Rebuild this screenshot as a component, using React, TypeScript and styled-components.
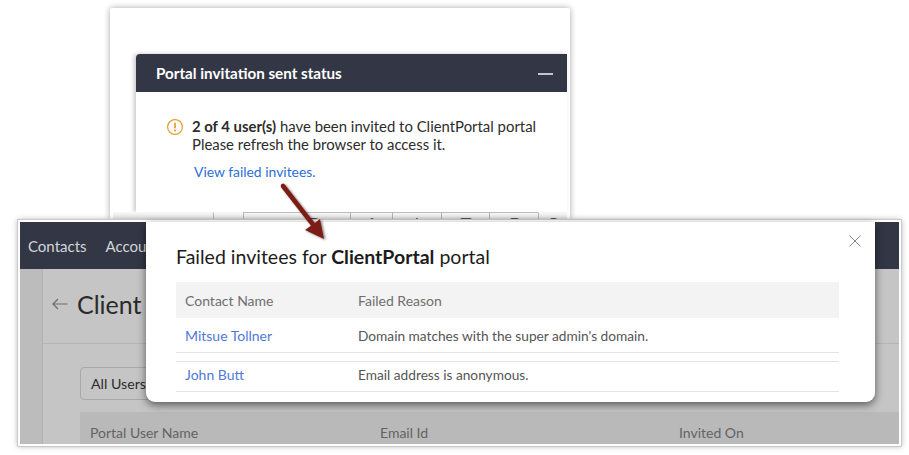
import {FC} from 'react';
import styled, {createGlobalStyle} from 'styled-components';

const Global = createGlobalStyle`
  html, body {
    margin: 0;
    background: #fff;
  }
  body {
    font-family: Lato, "Open Sans", sans-serif;
  }
`;

// the toolbar behind the modal, only its top few pixels are visible
const toolCells = [
  {w: 30, lined: false, mark: 0, shift: 0},
  {w: 107, lined: true, mark: 9, shift: 33},
  {w: 42, lined: true, mark: 4, shift: 0},
  {w: 49, lined: true, mark: 2, shift: 0},
  {w: 48, lined: true, mark: 12, shift: 0},
  {w: 49, lined: true, mark: 9, shift: 0},
  {w: 29, lined: false, mark: 7, shift: 0},
];

const App: FC = () => {
  return (
    <>
      <Global />
      <Page>
        <TopCard>
          <StatusPanel>
            <StatusHeader>
              <span>Portal invitation sent status</span>
              <Minimize />
            </StatusHeader>
            <StatusBody>
              <WarnIcon width="18" height="18" viewBox="0 0 18 18">
                <circle cx="9" cy="9" r="7.4" fill="none" stroke="#e3a03f" strokeWidth="1.3" />
                <rect x="8.1" y="4.6" width="1.8" height="5.8" rx="0.7" fill="#e3a03f" />
                <circle cx="9" cy="12.6" r="1.1" fill="#e3a03f" />
              </WarnIcon>
              <div>
                <Message><b>2 of 4 user(s)</b> have been invited to ClientPortal portal</Message>
                <Message>Please refresh the browser to access it.</Message>
                <ViewLink>View failed invitees.</ViewLink>
              </div>
            </StatusBody>
          </StatusPanel>
          <ToolStrip>
            {toolCells.map((c, i) => (
              <ToolCell key={i} $w={c.w} $lined={c.lined} $shift={c.shift}>
                {c.mark > 0 && <ToolMark $w={c.mark} />}
              </ToolCell>
            ))}
          </ToolStrip>
        </TopCard>

        <PortalFrame>
          <NavBar>
            <NavItem>Contacts</NavItem>
            <NavItem>Accou</NavItem>
          </NavBar>
          <Dimmed>
            <SideRail />
            <Main>
              <TitleRow>
                <svg width="16" height="12" viewBox="0 0 16 12">
                  <path d="M15.5 6H1M6 1L1 6l5 5" fill="none" stroke="#6e6e6e" strokeWidth="1.2" />
                </svg>
                <PageTitle>Client</PageTitle>
              </TitleRow>
              <FilterRow>
                <FilterBox>All Users</FilterBox>
              </FilterRow>
              <UsersHead>
                <UsersCol $w={290}>Portal User Name</UsersCol>
                <UsersCol $w={299}>Email Id</UsersCol>
                <UsersCol $w={200}>Invited On</UsersCol>
              </UsersHead>
            </Main>
          </Dimmed>

          <Modal>
            <CloseIcon width="12" height="12" viewBox="0 0 12 12">
              <path d="M.5.5l11 11M11.5.5l-11 11" stroke="#8a8a8a" strokeWidth="1" fill="none" />
            </CloseIcon>
            <ModalTitle>Failed invitees for <b>ClientPortal</b> portal</ModalTitle>
            <HeadRow>
              <NameCell>Contact Name</NameCell>
              <div>Failed Reason</div>
            </HeadRow>
            <BodyRow>
              <NameLink>Mitsue Tollner</NameLink>
              <ReasonCell>Domain matches with the super admin's domain.</ReasonCell>
            </BodyRow>
            <LastRow>
              <NameLink>John Butt</NameLink>
              <ReasonCell>Email address is anonymous.</ReasonCell>
            </LastRow>
          </Modal>
        </PortalFrame>

        <Arrow width="60" height="70" viewBox="0 0 60 70">
          <defs>
            <filter id="arrowShadow" x="-30%" y="-30%" width="160%" height="160%">
              <feDropShadow dx="1.5" dy="1" stdDeviation="1.2" floodColor="#000" floodOpacity="0.5" />
            </filter>
          </defs>
          <g filter="url(#arrowShadow)">
            <path d="M5 5L40 50" stroke="#7b1c16" strokeWidth="4.5" strokeLinecap="round" fill="none" />
            <path d="M46 58L27 49L42 38Z" fill="#7b1c16" />
          </g>
        </Arrow>
      </Page>
    </>
  );
};

const Page = styled.div`
  position: relative;
  width: 909px;
  height: 455px;
  overflow: hidden;
  padding-top: 8px;
  box-sizing: border-box;
`;

const TopCard = styled.div`
  width: 460px;
  height: 212px;
  margin-left: 110px;
  padding: 46px 3px 0 26px;
  box-sizing: border-box;
  background: #fff;
  border-radius: 2px;
  box-shadow: 0 0 6px rgba(0, 0, 0, 0.35);
  display: flex;
  flex-direction: column;
`;

const StatusPanel = styled.div`
  flex: 1;
  background: #fff;
  border-radius: 4px 0 0 0;
  box-shadow: -2px 0 4px rgba(0, 0, 0, 0.22);
`;

const StatusHeader = styled.div`
  height: 38px;
  padding: 0 14px 0 20px;
  display: flex;
  align-items: center;
  justify-content: space-between;
  background: #333745;
  border-radius: 4px 0 0 0;
  color: #fff;
  font-size: 15.2px;
  font-weight: 700;
`;

const Minimize = styled.div`
  width: 15px;
  height: 1.5px;
  margin-top: 2px;
  background: #c4c5c9;
`;

const StatusBody = styled.div`
  display: flex;
  gap: 8px;
  padding: 26px 0 0 30px;
`;

const WarnIcon = styled.svg`
  flex: none;
`;

const Message = styled.div`
  font-size: 14.9px;
  line-height: 17.5px;
  color: #2c2c2c;
  white-space: nowrap;
`;

const ViewLink = styled.div`
  margin: 10px 0 0 2px;
  font-size: 13.9px;
  line-height: 17px;
  color: #2b6fd6;
`;

const ToolStrip = styled.div`
  height: 8px;
  margin-left: -23px;
  padding-left: 100px;
  display: flex;
  background: linear-gradient(#f9f9f9, #e4e4e4);
`;

const ToolCell = styled.div<{$w: number; $lined: boolean; $shift: number}>`
  width: ${p => p.$w}px;
  padding-left: ${p => p.$shift}px;
  border-left: 1px solid #b5b5b5;
  border-top: 1px solid ${p => (p.$lined ? '#bcbcbc' : 'transparent')};
  box-sizing: border-box;
  display: flex;
  align-items: flex-end;
  justify-content: center;
`;

const ToolMark = styled.div<{$w: number}>`
  width: ${p => p.$w}px;
  height: 2px;
  border-radius: 2px 2px 0 0;
  background: #555;
`;

const PortalFrame = styled.div`
  position: relative;
  width: 879px;
  height: 222px;
  margin-left: 18px;
  border: 2px solid #fff;
  outline: 1px solid #c9c9c9;
  box-shadow: 0 0 6px rgba(0, 0, 0, 0.35);
  display: flex;
  flex-direction: column;
`;

const NavBar = styled.div`
  height: 47px;
  flex: none;
  padding-left: 8px;
  display: flex;
  align-items: center;
  gap: 19px;
  background: #333745;
`;

const NavItem = styled.div`
  font-size: 15px;
  color: #d4d5d8;
`;

const Dimmed = styled.div`
  flex: 1;
  min-height: 0;
  display: flex;
  background: #c5c5c5;
  overflow: hidden;
`;

const SideRail = styled.div`
  width: 23px;
  flex: none;
  background: #bcbcbc;
  border-right: 1px solid #b2b2b2;
  box-sizing: border-box;
`;

const Main = styled.div`
  flex: 1;
  min-width: 0;
`;

const TitleRow = styled.div`
  height: 75px;
  padding: 0 0 4px 9px;
  display: flex;
  align-items: center;
  gap: 9px;
  border-bottom: 1px solid #b5b5b5;
  box-sizing: border-box;
`;

const PageTitle = styled.div`
  font-size: 25px;
  color: #2a2a2a;
  white-space: nowrap;
`;

const FilterRow = styled.div`
  padding: 23px 0 0 37px;
`;

const FilterBox = styled.div`
  width: 120px;
  height: 33px;
  padding-left: 10px;
  display: flex;
  align-items: center;
  box-sizing: border-box;
  border: 1px solid #a9a9a9;
  border-radius: 4px;
  font-size: 14.2px;
  color: #2c2c2c;
`;

const UsersHead = styled.div`
  height: 40px;
  margin: 12px 0 0 37px;
  padding: 12px 0 0 10px;
  box-sizing: border-box;
  display: flex;
  background: #b9b9b9;
  font-size: 14px;
  color: #636363;
`;

const UsersCol = styled.div<{$w: number}>`
  width: ${p => p.$w}px;
  flex: none;
`;

const Modal = styled.div`
  position: absolute;
  left: 126px;
  top: 0;
  width: 729px;
  height: 180px;
  padding: 23px 36px 0 30px;
  box-sizing: border-box;
  background: #fff;
  border-radius: 0 0 9px 9px;
  box-shadow: 0 3px 9px rgba(0, 0, 0, 0.55);
`;

const CloseIcon = styled.svg`
  position: absolute;
  top: 13px;
  right: 14px;
`;

const ModalTitle = styled.div`
  height: 37px;
  font-size: 19.5px;
  line-height: 24px;
  color: #1c1c1c;
`;

const HeadRow = styled.div`
  height: 36px;
  display: flex;
  align-items: center;
  background: #f3f3f3;
  font-size: 14px;
  color: #6f6f6f;
`;

const NameCell = styled.div`
  width: 182px;
  padding-left: 9px;
  box-sizing: border-box;
`;

const NameLink = styled(NameCell)`
  color: #5079d8;
`;

const ReasonCell = styled.div`
  font-size: 13.7px;
`;

const BodyRow = styled.div`
  height: 34px;
  display: flex;
  align-items: center;
  border-bottom: 1px solid #e4e4e4;
  font-size: 14px;
  color: #555;
`;

const LastRow = styled(BodyRow)`
  height: 24px;
  margin-top: 9px;
  padding-bottom: 5px;
  box-shadow: 0 -1px 0 #e4e4e4;
`;

const Arrow = styled.svg`
  position: absolute;
  left: 278px;
  top: 181px;
`;

export default App;
